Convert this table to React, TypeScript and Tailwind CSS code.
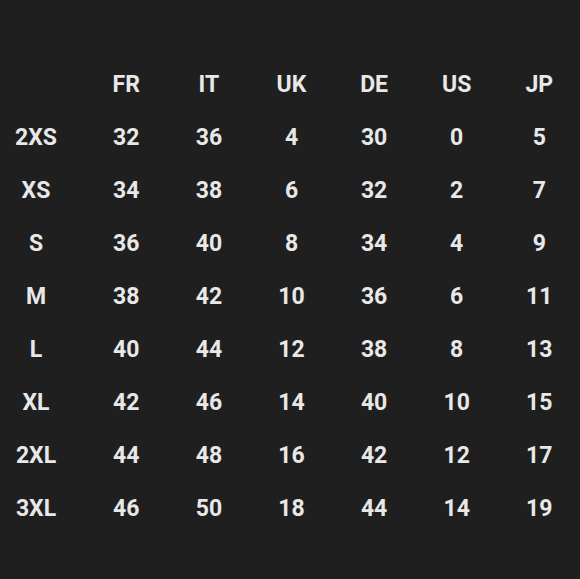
const headers = ["", "FR", "IT", "UK", "DE", "US", "JP"];

const rows: [string, ...number[]][] = [
  ["2XS", 32, 36, 4, 30, 0, 5],
  ["XS", 34, 38, 6, 32, 2, 7],
  ["S", 36, 40, 8, 34, 4, 9],
  ["M", 38, 42, 10, 36, 6, 11],
  ["L", 40, 44, 12, 38, 8, 13],
  ["XL", 42, 46, 14, 40, 10, 15],
  ["2XL", 44, 48, 16, 42, 12, 17],
  ["3XL", 46, 50, 18, 44, 14, 19],
];

export default function App() {
  return (
    <div
      className="w-[580px] h-[579px] bg-[#1f1f1f] pt-[59px] text-[#e8e8e8] text-[23px] font-bold overflow-hidden"
      style={{ fontFamily: "Roboto, 'Noto Sans', sans-serif" }}
    >
      {/* Header row */}
      <div className="grid grid-cols-[85px_repeat(6,82.6px)] h-[53px] items-center">
        {headers.map((h, i) => (
          <div key={i} className={i === 0 ? "text-center pr-[13px]" : "text-center"}>
            {h}
          </div>
        ))}
      </div>

      {/* Size rows */}
      {rows.map((row, r) => (
        <div
          key={r}
          className="grid grid-cols-[85px_repeat(6,82.6px)] h-[53px] items-center"
        >
          {row.map((cell, i) => (
            <div key={i} className={i === 0 ? "text-center pr-[13px]" : "text-center"}>
              {cell}
            </div>
          ))}
        </div>
      ))}
    </div>
  );
}
